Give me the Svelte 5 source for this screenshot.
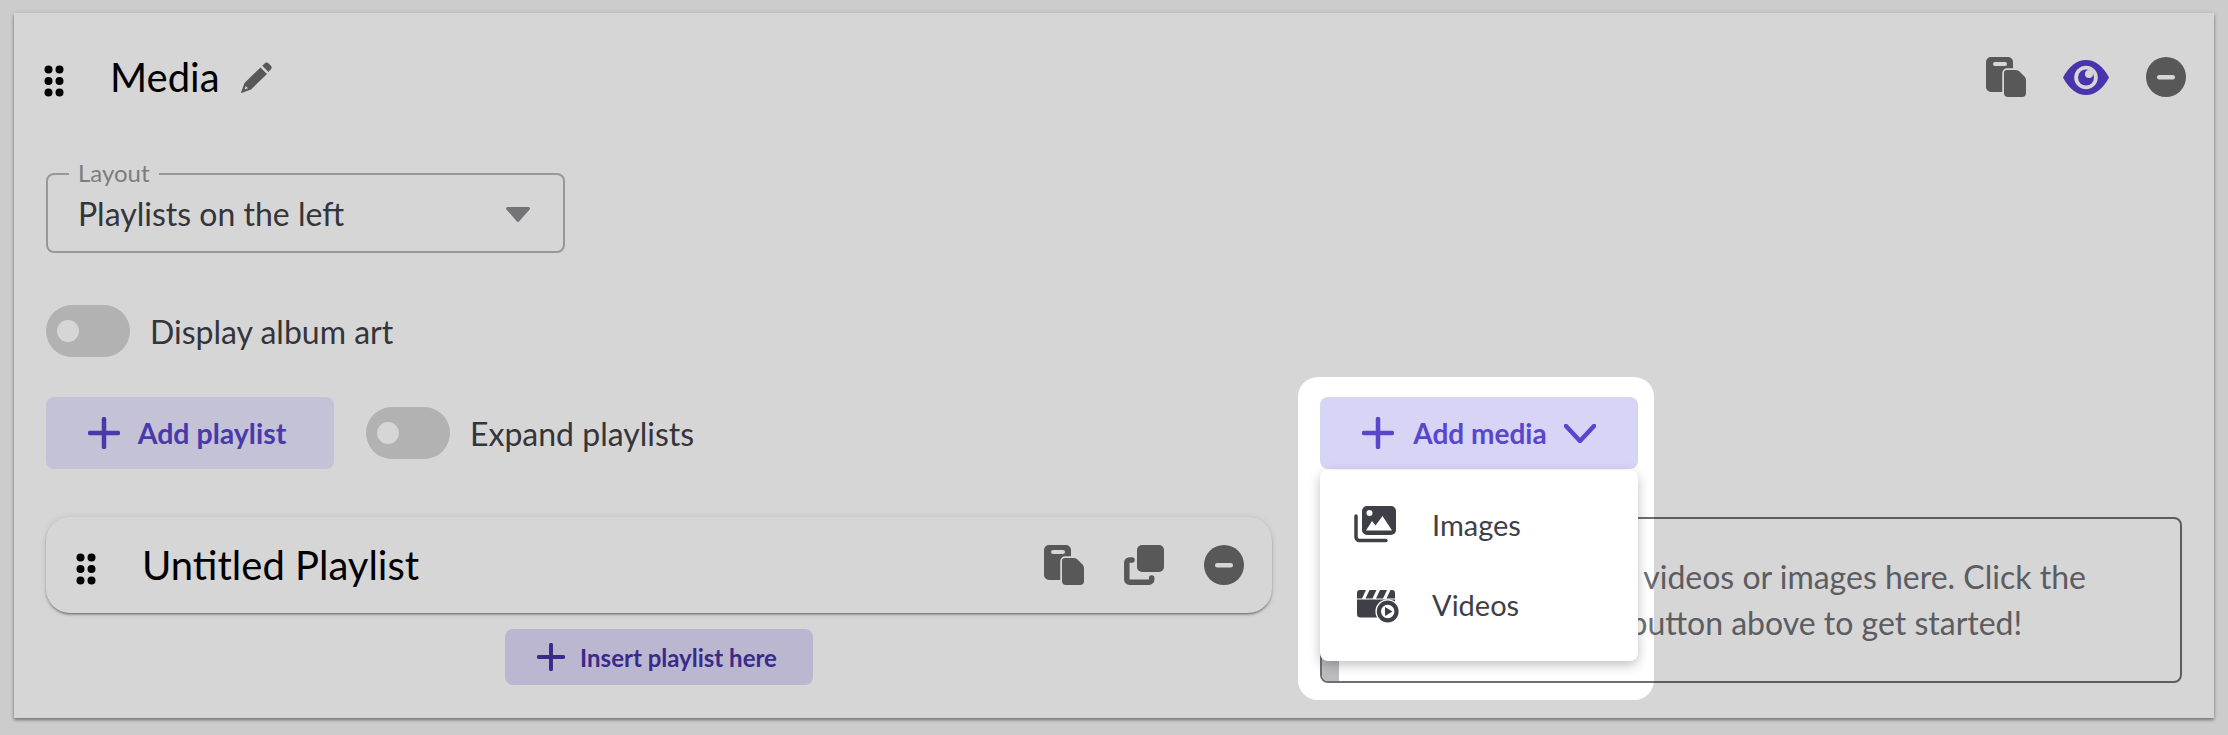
<script lang="ts">
  // Header and playlist rows share the same little action icons, drawn in snippets below
  let layout = $state('Playlists on the left');
  let items = [
    { label: 'Images', kind: 'images' },
    { label: 'Videos', kind: 'videos' }
  ];
</script>

{#snippet handle()}
  <svg class="handle" viewBox="0 0 20 32" width="20" height="32" fill="#000">
    <circle cx="4.5" cy="4.5" r="4" /><circle cx="15.5" cy="4.5" r="4" />
    <circle cx="4.5" cy="16" r="4" /><circle cx="15.5" cy="16" r="4" />
    <circle cx="4.5" cy="27.5" r="4" /><circle cx="15.5" cy="27.5" r="4" />
  </svg>
{/snippet}

{#snippet plus(size)}
  <svg viewBox="0 0 32 32" width={size} height={size} fill="none" stroke="currentColor" stroke-width="4.500" stroke-linecap="round">
    <path d="M16 2V30M2 16H30" />
  </svg>
{/snippet}

{#snippet copyIcon()}
  <svg viewBox="0 0 40 40" width="40" height="40">
    <path fill="#696969" fill-rule="evenodd" d="M5 0H22a5 5 0 0 1 5 5V35H5a5 5 0 0 1-5-5V5a5 5 0 0 1 5-5ZM9 5a2 2 0 0 0 0 4H19a2 2 0 0 0 0-4Z" />
    <path fill="#696969" stroke="#fff" stroke-width="3.5" paint-order="stroke" stroke-linejoin="round" d="M21 13H30Q32 13 33.500 14.500L38.500 19.500Q40 21 40 23V36a4 4 0 0 1-4 4H22a4 4 0 0 1-4-4V16a3 3 0 0 1 3-3Z" />
  </svg>
{/snippet}

{#snippet dupIcon()}
  <svg viewBox="0 0 40 40" width="40" height="40">
    <rect x="13" y="0" width="27" height="27" rx="5" fill="#696969" />
    <path fill="none" stroke="#696969" stroke-width="5.5" stroke-linecap="round" d="M8 15H5.5a2.7 2.7 0 0 0-2.7 2.7V34.5a2.7 2.7 0 0 0 2.7 2.7H25a2.7 2.7 0 0 0 2.7-2.7V33" />
  </svg>
{/snippet}

{#snippet minusIcon()}
  <svg viewBox="0 0 40 40" width="40" height="40">
    <circle cx="20" cy="20" r="20" fill="#696969" />
    <rect x="11" y="18" width="18" height="4.5" rx="2.2" fill="#fff" />
  </svg>
{/snippet}

<div class="page">
  <div class="card">
    <header class="head">
      {@render handle()}
      <h2>Media</h2>
      <svg class="pencil" viewBox="0 0 32 32" width="32" height="32">
        <path fill="#696969" fill-rule="evenodd" d="M20.5 5.5 27 12 11 27.5 1.5 31 1 30.500 4.500 21ZM5.800 24 4.600 27.500 8 26.200Z" />
        <path fill="#696969" d="M22.300 3.700 24.600 1.400a2.800 2.800 0 0 1 4 0L30.700 3.500a2.800 2.800 0 0 1 0 4L28.400 9.900Z" />
      </svg>
      <div class="actions head-actions">
        {@render copyIcon()}
        <svg viewBox="0 0 46 35" width="46" height="35">
          <path fill="#5a3dcf" d="M0 17.500C6 6 14 0 23 0S40 6 46 17.500C40 29 32 35 23 35S6 29 0 17.500Z" />
          <circle cx="23" cy="17.500" r="11.800" fill="#fff" />
          <circle cx="23" cy="17.500" r="8" fill="#5a3dcf" />
          <circle cx="26" cy="14" r="4" fill="#fff" />
        </svg>
        {@render minusIcon()}
      </div>
    </header>

    <div class="select">
      <span class="select-label">Layout</span>
      <span class="select-value">{layout}</span>
      <svg class="caret" viewBox="0 0 24 15" width="24" height="15"><path fill="#89898f" d="M1.500 0H22.500a1.500 1.500 0 0 1 1.100 2.500L13 14.500a1.400 1.400 0 0 1-2 0L.4 2.500A1.500 1.500 0 0 1 1.500 0Z" /></svg>
    </div>

    <label class="toggle-row album">
      <span class="toggle"><span class="thumb"></span></span>
      Display album art
    </label>

    <div class="columns">
      <div class="bar">
        <button class="btn add-playlist">{@render plus(32)} Add playlist</button>
        <label class="toggle-row">
          <span class="toggle"><span class="thumb"></span></span>
          Expand playlists
        </label>
      </div>

      <div class="media-bar">
        <button class="btn add-media">
          {@render plus(32)} Add media
          <svg class="chevron" viewBox="0 0 32 19" width="32" height="19" fill="none" stroke="currentColor" stroke-width="4.500" stroke-linecap="round" stroke-linejoin="round"><path d="M2 2 16 17 30 2" /></svg>
        </button>
        <div class="spotlight"></div>
        <ul class="menu">
          {#each items as item}
            <li>
              {#if item.kind === 'images'}
                <svg viewBox="0 0 42 36" width="42" height="36">
                  <path fill="none" stroke="#3f4047" stroke-width="3.500" stroke-linecap="round" d="M2 10V31a3.500 3.500 0 0 0 3.500 3.500H32" />
                  <path fill="#3f4047" fill-rule="evenodd" d="M13 0H37a5 5 0 0 1 5 5V24a5 5 0 0 1-5 5H13a5 5 0 0 1-5-5V5a5 5 0 0 1 5-5ZM15.500 4a3 3 0 1 0 0 6 3 3 0 0 0 0-6ZM28.500 10 21.500 19.500 18 15 12 24.500H38Z" />
                </svg>
              {:else}
                <svg viewBox="0 0 42 36" width="42" height="36">
                  <g transform="translate(3 3)">
                    <path fill="#3f4047" d="M3 1H9L5 9.500H0V4a3 3 0 0 1 3-3ZM12.500 1H19.500L15.500 9.500H8.500ZM23 1H30L26 9.500H19ZM33.500 1H35a3 3 0 0 1 3 3V9.500H29.500ZM0 10.500H38V25a3.500 3.500 0 0 1-3.500 3.500H3.500A3.500 3.500 0 0 1 0 25Z" />
                    <circle cx="30.700" cy="22.500" r="12.300" fill="#fff" />
                    <circle cx="30.700" cy="22.500" r="8.800" fill="#fff" stroke="#3f4047" stroke-width="4.200" />
                    <path fill="#3f4047" d="M28 18 35.500 22.500 28 27Z" />
                  </g>
                </svg>
              {/if}
              <span>{item.label}</span>
            </li>
          {/each}
        </ul>
      </div>

      <div class="playlists">
        <div class="playlist">
          {@render handle()}
          <h3>Untitled Playlist</h3>
          <div class="actions row-actions">
            {@render copyIcon()}
            {@render dupIcon()}
            {@render minusIcon()}
          </div>
        </div>
        <button class="btn insert">{@render plus(28)} Insert playlist here</button>
      </div>

      <div class="empty">
        <span class="strip"></span>
        <p>There were no videos or images here. Click the<br />Add new button above to get started!</p>
      </div>
    </div>
  </div>
</div>

<style>
  :global(body) {
    margin: 0;
  }

  .page {
    position: relative;
    height: 100vh;
    box-sizing: border-box;
    padding: 13px 14px 0;
    overflow: hidden;
    background: #f4f4f4;
  }

  .card {
    height: 705px;
    box-sizing: border-box;
    padding: 0 32px;
    background: #fff;
    box-shadow: 0 2px 3px rgba(0, 0, 0, 0.4), 0 0 6px rgba(0, 0, 0, 0.1);
    font-family: 'Lato', sans-serif;
    color: #3f4047;
  }

  .head {
    display: flex;
    align-items: center;
    height: 40px;
    padding-top: 44px;
  }

  .handle {
    flex: none;
    margin-top: 8px;
  }

  .head .handle {
    margin-left: -2px;
  }

  h2 {
    margin: 0 0 0 46px;
    font-size: 40px;
    font-weight: 400;
    color: #000;
  }

  .pencil {
    margin: 2px 0 0 20px;
  }

  .actions {
    display: flex;
    align-items: center;
    margin-left: auto;
  }

  .head-actions {
    gap: 37px;
    margin-right: -4px;
  }

  .row-actions {
    gap: 40px;
  }

  .select {
    position: relative;
    display: flex;
    align-items: center;
    justify-content: space-between;
    box-sizing: border-box;
    width: 519px;
    height: 80px;
    margin-top: 76px;
    padding: 0 33px 0 30px;
    border: 2px solid #b6b6b6;
    border-radius: 8px;
  }

  .select-label {
    position: absolute;
    top: -15px;
    left: 21px;
    padding: 0 9px;
    background: #fff;
    font-size: 24px;
    line-height: 26px;
    color: #969699;
  }

  .select-value {
    font-size: 32px;
  }

  .caret {
    margin-top: 2px;
  }

  .toggle-row {
    display: flex;
    align-items: center;
    gap: 20px;
    font-size: 32px;
  }

  .album {
    margin-top: 52px;
  }

  .toggle {
    display: flex;
    align-items: center;
    width: 84px;
    height: 52px;
    box-sizing: border-box;
    padding-left: 11px;
    border-radius: 26px;
    background: #d4d4d6;
  }

  .thumb {
    width: 22px;
    height: 22px;
    border-radius: 50%;
    background: #fff;
  }

  .columns {
    display: grid;
    grid-template-columns: 1226px 862px;
    column-gap: 48px;
    row-gap: 48px;
    margin-top: 40px;
  }

  .bar {
    display: flex;
    align-items: center;
    gap: 32px;
  }

  .btn {
    display: flex;
    align-items: center;
    justify-content: center;
    border: 0;
    border-radius: 8px;
    font-family: inherit;
    font-weight: 700;
    padding: 0;
  }

  .add-playlist {
    width: 288px;
    height: 72px;
    gap: 18px;
    padding-right: 6px;
    background: #eae8ff;
    color: #5846cc;
    font-size: 28.5px;
  }

  .media-bar {
    position: relative;
  }

  .add-media {
    width: 318px;
    height: 72px;
    gap: 19px;
    background: #d8d4f5;
    color: #5846cc;
    font-size: 28px;
  }

  .chevron {
    margin-left: -2px;
  }

  /* dims the whole page, except for a hole around the dropdown */
  .spotlight {
    position: absolute;
    top: -20px;
    left: -22px;
    width: 356px;
    height: 323px;
    border-radius: 20px;
    box-shadow: 0 0 0 3000px rgba(0, 0, 0, 0.16);
    z-index: 5;
    pointer-events: none;
  }

  .menu {
    position: absolute;
    top: 73px;
    left: 0;
    z-index: 6;
    width: 318px;
    height: 191px;
    box-sizing: border-box;
    margin: 0;
    padding: 14px 0;
    list-style: none;
    background: #fff;
    border-radius: 8px;
    box-shadow: 0 4px 12px rgba(0, 0, 0, 0.25);
    font-size: 29px;
  }

  .menu li {
    display: flex;
    align-items: center;
    gap: 36px;
    height: 80px;
    padding-left: 34px;
  }

  .menu svg {
    overflow: visible;
  }

  .playlists {
    display: flex;
    flex-direction: column;
    align-items: center;
    gap: 16px;
  }

  .playlist {
    display: flex;
    align-items: center;
    width: 100%;
    height: 96px;
    box-sizing: border-box;
    padding: 0 28px 0 30px;
    border-radius: 24px;
    background: #fff;
    box-shadow: 0 2px 3px -1px rgba(0, 0, 0, 0.55), 0 0 6px rgba(0, 0, 0, 0.1);
  }

  h3 {
    margin: 0 0 0 46px;
    font-size: 40px;
    font-weight: 400;
    color: #000;
  }

  .insert {
    width: 308px;
    height: 56px;
    gap: 15px;
    padding-right: 4px;
    background: #dfdaf9;
    color: #4633a4;
    font-size: 24px;
  }

  .empty {
    position: relative;
    height: 166px;
    box-sizing: border-box;
    display: flex;
    align-items: center;
    justify-content: center;
    padding-left: 17px;
    border: 2px solid #6e6e74;
    border-radius: 8px;
    overflow: hidden;
    color: #6e6e74;
    font-size: 32px;
    line-height: 46px;
  }

  .strip {
    position: absolute;
    top: 0;
    bottom: 0;
    left: 0;
    width: 17px;
    background: #bcbcc0;
  }

  .empty p {
    margin: 0;
    text-align: center;
  }
</style>
